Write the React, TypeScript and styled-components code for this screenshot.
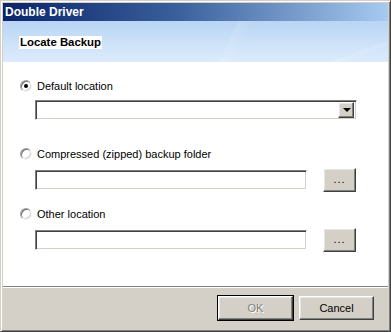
import React, { useState } from "react";
import styled, { createGlobalStyle } from "styled-components";

const GlobalStyle = createGlobalStyle`
  html, body {
    margin: 0;
    padding: 0;
    background: #d4d0c8;
  }
  body {
    font-family: "Liberation Sans", Arial, sans-serif;
    font-size: 11px;
    color: #000000;
  }
`;

const Window = styled.div`
  width: 391px;
  height: 332px;
  box-sizing: border-box;
  display: flex;
  flex-direction: column;
  background: #d4d0c8;
  border: 1px solid;
  border-color: #d4d0c8 #404040 #404040 #d4d0c8;
  box-shadow: inset 1px 1px #ffffff, inset -1px -1px #808080;
  padding: 2px;
`;

const TitleBar = styled.div`
  height: 18px;
  display: flex;
  align-items: center;
  padding-left: 2px;
  background: linear-gradient(to right, #0a246a 0%, #3a5f9c 45%, #a6caf0 100%);
  color: #ffffff;
  font-weight: 700;
  font-size: 12px;
  flex-shrink: 0;
`;

const HeaderBand = styled.div`
  height: 41px;
  flex-shrink: 0;
  display: flex;
  align-items: flex-start;
  padding: 15px 0 0 16px;
  box-sizing: border-box;
  background:
    linear-gradient(115deg, transparent 0%, transparent 58%, rgba(255, 255, 255, 0.12) 58.5%, transparent 62%),
    linear-gradient(160deg, transparent 0%, transparent 88%, rgba(255, 255, 255, 0.15) 89%, transparent 92%),
    linear-gradient(to bottom, #b8d5f4 0%, #cfe3f9 60%, #dcebfc 100%);
`;

const HeaderLabel = styled.span`
  background: #ffffff;
  font-weight: 700;
  font-size: 11.4px;
  line-height: 13px;
  padding: 0 1px;
`;

const Content = styled.div`
  flex: 1;
  background: #ffffff;
  padding: 16px 31px 0 17px;
  display: flex;
  flex-direction: column;
  border-bottom: 1px solid #808080;
`;

const Group = styled.div<{ $top: number }>`
  display: flex;
  flex-direction: column;
  gap: 6px;
  margin-top: ${(p) => p.$top}px;
`;

const RadioRow = styled.label`
  height: 16px;
  display: flex;
  align-items: center;
  gap: 5px;
  cursor: default;
`;

const RadioCircle = styled.span<{ $checked: boolean }>`
  width: 12px;
  height: 12px;
  box-sizing: border-box;
  border-radius: 50%;
  border: 1px solid;
  border-color: #a0a0a0 #f4f4f4 #f4f4f4 #a0a0a0;
  box-shadow: inset 1px 1px #707070, inset -1px -1px #d4d0c8;
  background: #ffffff;
  display: flex;
  align-items: center;
  justify-content: center;
  &::after {
    content: "";
    width: 4px;
    height: 4px;
    border-radius: 50%;
    background: #000000;
    display: ${(p) => (p.$checked ? "block" : "none")};
  }
`;

const FieldRow = styled.div`
  display: flex;
  align-items: center;
  gap: 16px;
  padding-left: 15px;
`;

const Sunken = styled.div`
  height: 20px;
  box-sizing: border-box;
  background: #ffffff;
  border: 1px solid;
  border-color: #808080 #ffffff #ffffff #808080;
  box-shadow: inset 1px 1px #404040, inset -1px -1px #d4d0c8;
`;

const Combo = styled(Sunken)`
  flex: 1;
  display: flex;
  justify-content: flex-end;
  align-items: center;
  padding: 2px;
`;

const TextField = styled(Sunken)`
  width: 272px;
`;

const RaisedButton = styled.div`
  box-sizing: border-box;
  background: #d4d0c8;
  border: 1px solid;
  border-color: #ffffff #404040 #404040 #ffffff;
  box-shadow: inset -1px -1px #808080, inset 1px 1px #e8e6e0;
  display: flex;
  align-items: center;
  justify-content: center;
`;

const DropButton = styled(RaisedButton)`
  width: 16px;
  height: 16px;
`;

const Arrow = styled.span`
  width: 0;
  height: 0;
  border-left: 4px solid transparent;
  border-right: 4px solid transparent;
  border-top: 4px solid #000000;
  margin-left: 1px;
`;

const BrowseButton = styled(RaisedButton)`
  width: 33px;
  height: 24px;
  font-size: 11px;
  letter-spacing: 1px;
  padding-bottom: 2px;
`;

const Footer = styled.div`
  height: 42px;
  flex-shrink: 0;
  border-top: 1px solid #ffffff;
  display: flex;
  justify-content: flex-end;
  align-items: flex-start;
  gap: 6px;
  padding: 8px 14px 0 0;
  box-sizing: border-box;
`;

const DialogButton = styled(RaisedButton)<{ $default?: boolean; $disabled?: boolean }>`
  width: 75px;
  height: 24px;
  font-size: 11px;
  color: ${(p) => (p.$disabled ? "#808080" : "#000000")};
  text-shadow: ${(p) => (p.$disabled ? "1px 1px #ffffff" : "none")};
  ${(p) =>
    p.$default
      ? `box-shadow: inset -1px -1px #808080, inset 1px 1px #e8e6e0, 0 0 0 1px #000;`
      : ""}
`;

type Choice = "default" | "zip" | "other";

const App = () => {
  const [choice, setChoice] = useState<Choice>("default");

  return (
    <>
      <GlobalStyle />
      <Window>
        <TitleBar>Double Driver</TitleBar>
        <HeaderBand>
          <HeaderLabel>Locate Backup</HeaderLabel>
        </HeaderBand>
        <Content>
          <Group $top={0}>
            <RadioRow onClick={() => setChoice("default")}>
              <RadioCircle $checked={choice === "default"} />
              Default location
            </RadioRow>
            <FieldRow>
              <Combo>
                <DropButton>
                  <Arrow />
                </DropButton>
              </Combo>
            </FieldRow>
          </Group>
          <Group $top={26}>
            <RadioRow onClick={() => setChoice("zip")}>
              <RadioCircle $checked={choice === "zip"} />
              Compressed (zipped) backup folder
            </RadioRow>
            <FieldRow>
              <TextField />
              <BrowseButton>...</BrowseButton>
            </FieldRow>
          </Group>
          <Group $top={14}>
            <RadioRow onClick={() => setChoice("other")}>
              <RadioCircle $checked={choice === "other"} />
              Other location
            </RadioRow>
            <FieldRow>
              <TextField />
              <BrowseButton>...</BrowseButton>
            </FieldRow>
          </Group>
        </Content>
        <Footer>
          <DialogButton $default $disabled>
            OK
          </DialogButton>
          <DialogButton>Cancel</DialogButton>
        </Footer>
      </Window>
    </>
  );
};

export default App;
